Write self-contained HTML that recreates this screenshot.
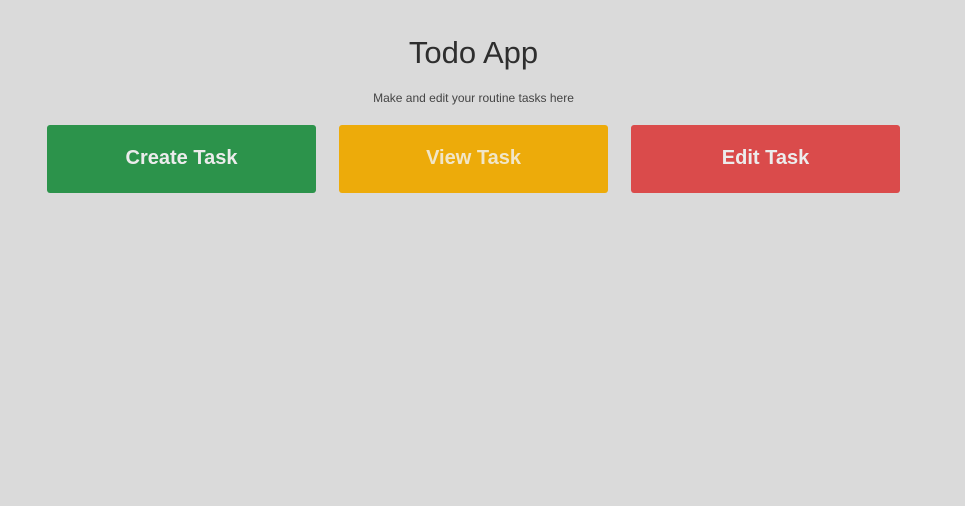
<!DOCTYPE html>
<html><head><style>
html,body{margin:0;width:965px;height:506px;background:#dadada;font-family:"Liberation Sans",sans-serif;overflow:hidden;position:relative}
h1{position:absolute;top:35px;left:0;width:947px;text-align:center;margin:0;font-size:31px;font-weight:500;color:#2e2e2e}
p{position:absolute;top:91px;left:0;width:947px;text-align:center;margin:0;font-size:12px;color:#444}
.b{position:absolute;top:125px;width:269px;height:68px;border-radius:3px;color:#ececec;font-size:20px;font-weight:bold;text-align:center;line-height:66px}
</style></head><body>
<h1>Todo App</h1>
<p>Make and edit your routine tasks here</p>
<div class="b" style="left:47px;background:#2c934b">Create Task</div>
<div class="b" style="left:339px;background:#edab0a;color:#f1e6c8">View Task</div>
<div class="b" style="left:631px;background:#da4b4b">Edit Task</div>
</body></html>
